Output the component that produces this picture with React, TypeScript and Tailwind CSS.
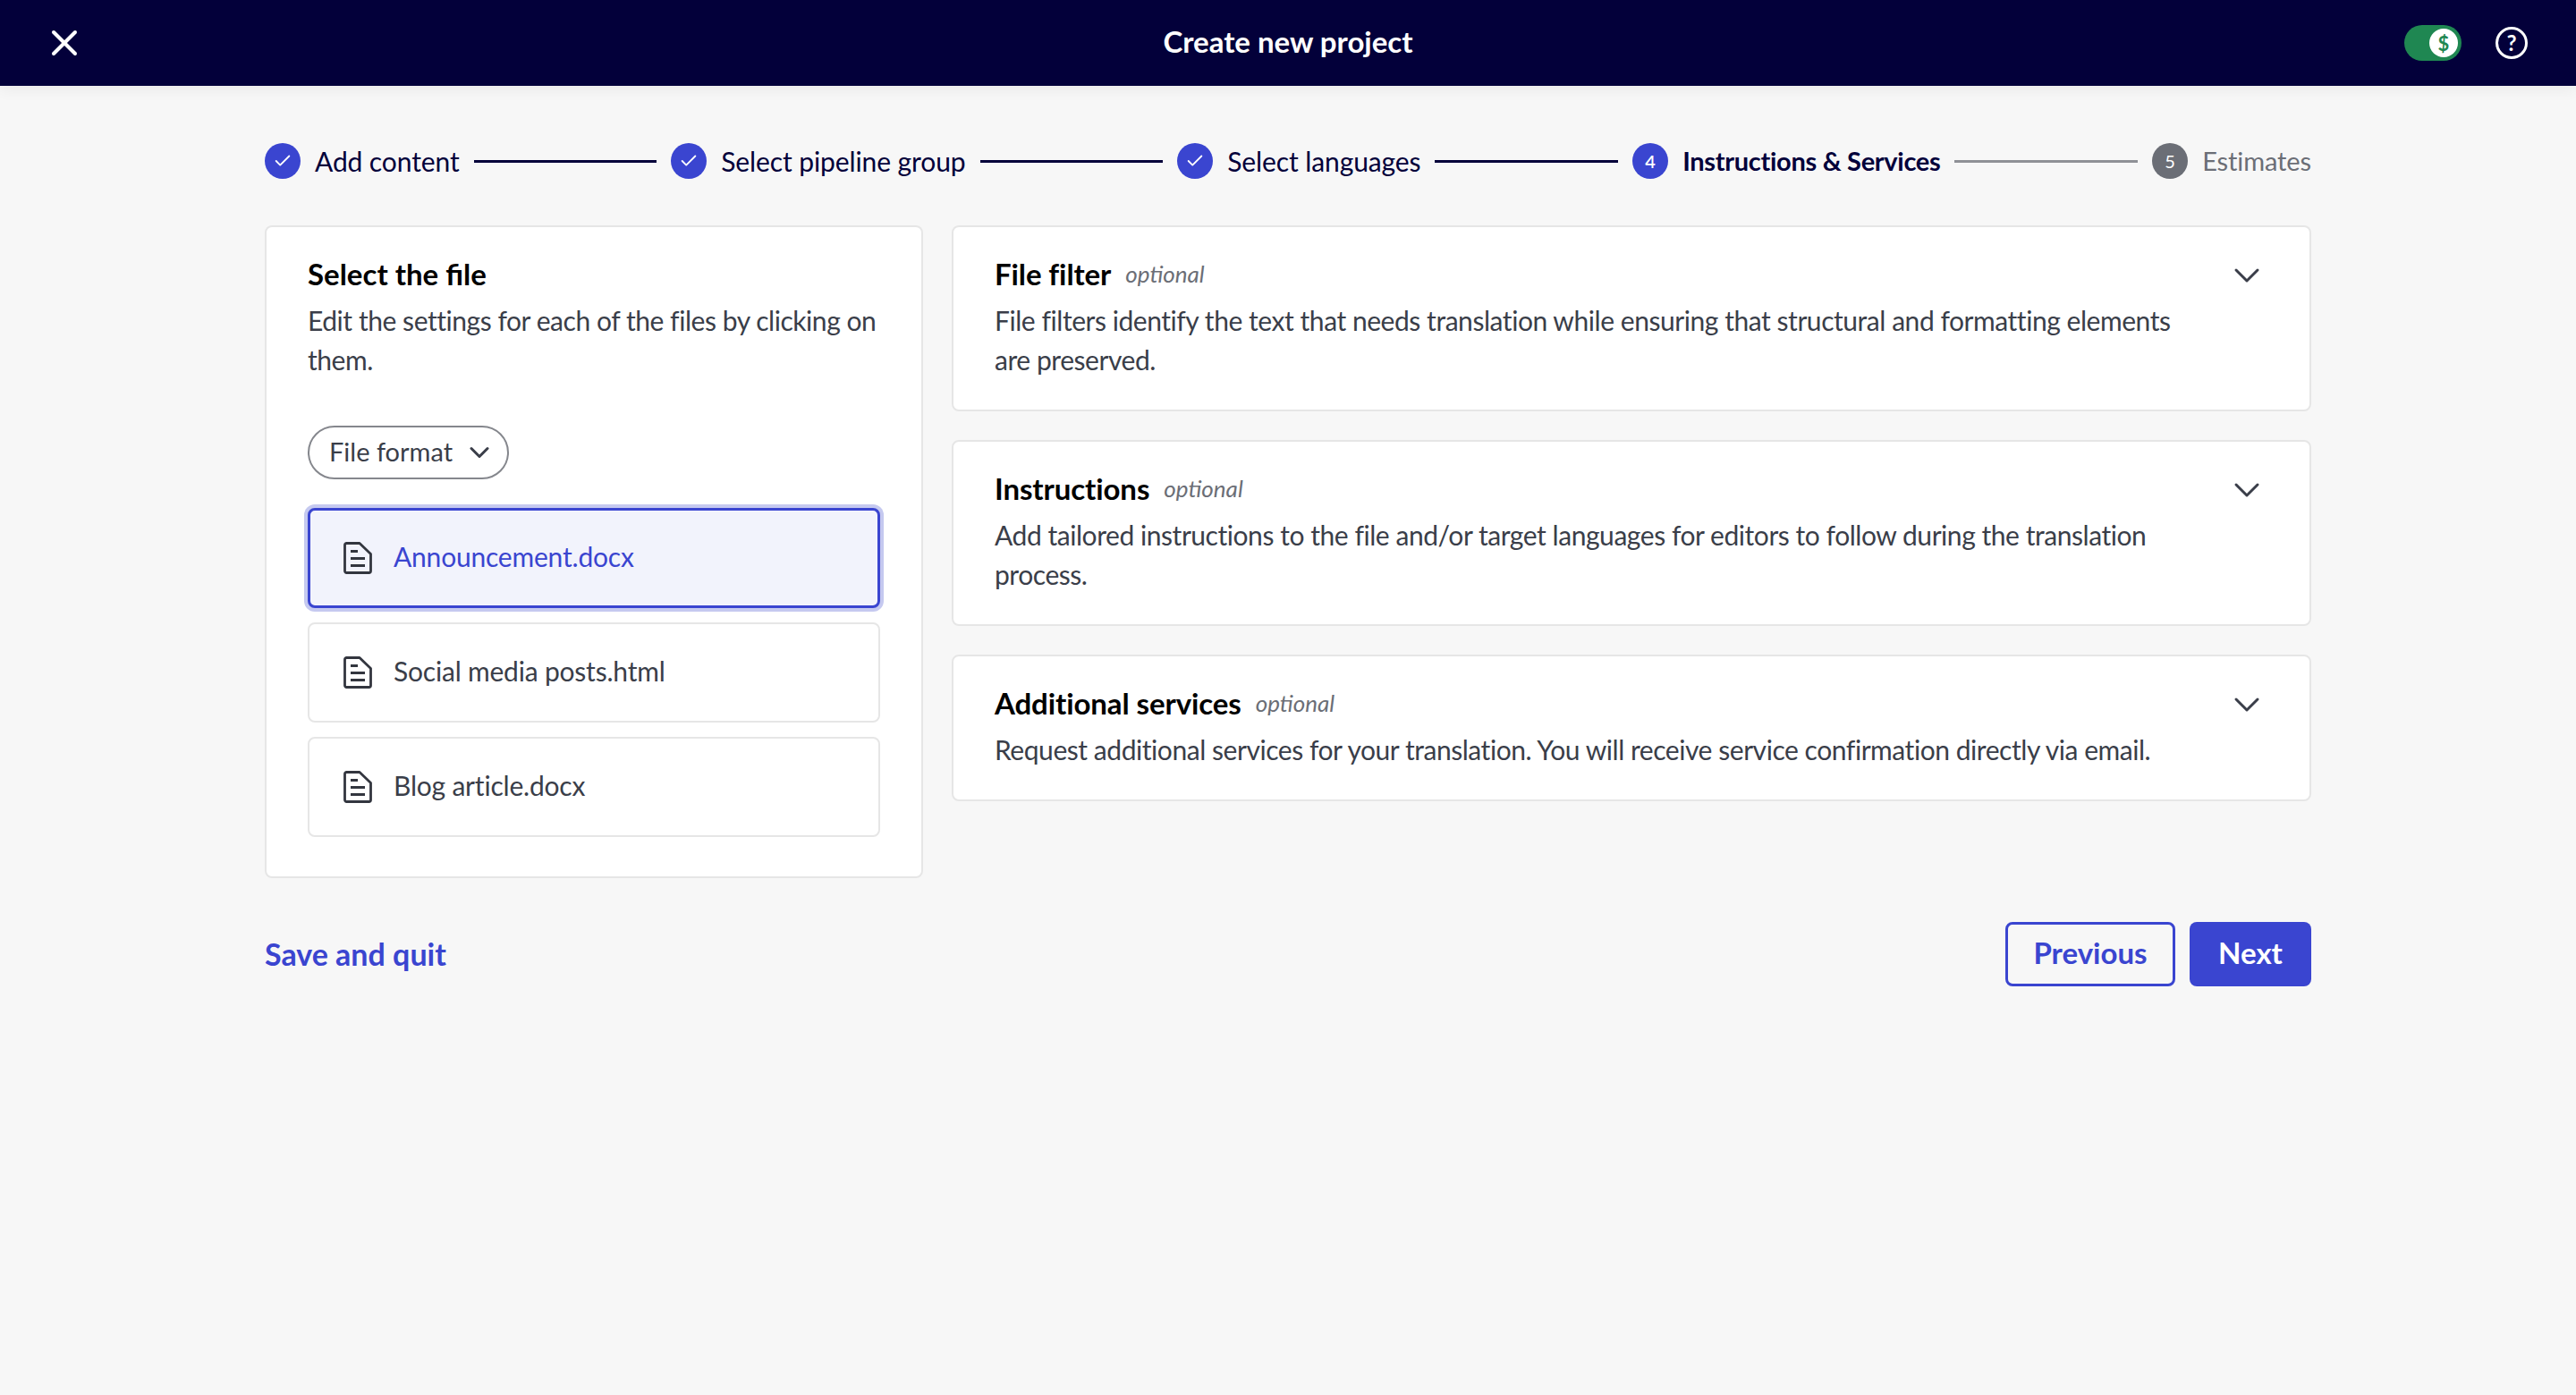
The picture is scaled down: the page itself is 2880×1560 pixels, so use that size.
import { Fragment } from "react";
import { Check, ChevronDown, X } from "lucide-react";

const FONT = "font-['Lato','Liberation_Sans',sans-serif]";

const STEPS = [
  { label: "Add content", state: "done" },
  { label: "Select pipeline group", state: "done" },
  { label: "Select languages", state: "done" },
  { label: "Instructions & Services", state: "current", num: 4 },
  { label: "Estimates", state: "todo", num: 5 },
];

const FILES = [
  { name: "Announcement.docx", selected: true },
  { name: "Social media posts.html", selected: false },
  { name: "Blog article.docx", selected: false },
];

const SECTIONS = [
  {
    title: "File filter",
    text: "File filters identify the text that needs translation while ensuring that structural and formatting elements are preserved.",
  },
  {
    title: "Instructions",
    text: "Add tailored instructions to the file and/or target languages for editors to follow during the translation process.",
  },
  {
    title: "Additional services",
    text: "Request additional services for your translation. You will receive service confirmation directly via email.",
  },
];

function FileIcon() {
  return (
    <svg width="32" height="36" viewBox="0 0 32 36" fill="none" stroke="#33363f" strokeWidth="2.8" strokeLinejoin="round" className="shrink-0">
      <path d="M3.5 1.5H18L30.5 13.5V32.5a2 2 0 0 1-2 2H3.5a2 2 0 0 1-2-2V3.5a2 2 0 0 1 2-2z" />
      <path d="M8 10.5h8M8 18.5h16M8 26.5h16" />
    </svg>
  );
}

function Stepper() {
  return (
    <div className="flex items-center gap-4 h-10">
      {STEPS.map((s, i) => (
        <Fragment key={s.label}>
          <span
            className={
              s.state === "todo"
                ? "flex items-center justify-center w-10 h-10 rounded-full bg-[#6b6e76] text-white text-[20px] shrink-0"
                : "flex items-center justify-center w-10 h-10 rounded-full bg-[#3a45d0] text-white text-[20px] font-semibold shrink-0"
            }
          >
            {s.state === "done" ? <Check size={22} strokeWidth={2} /> : s.num}
          </span>
          <span
            className={
              s.state === "current"
                ? "text-[29px] font-bold tracking-[-0.3px] text-[#03003a] whitespace-nowrap"
                : s.state === "todo"
                  ? "text-[29px] tracking-[-0.1px] text-[#6b6e76] whitespace-nowrap"
                  : "text-[30px] tracking-[-0.1px] text-[#03003a] whitespace-nowrap"
            }
          >
            {s.label}
          </span>
          {i < STEPS.length - 1 && (
            <span className={s.state === "current" ? "flex-1 h-[3px] bg-[#8f9196]" : "flex-1 h-[3px] bg-[#03003a]"} />
          )}
        </Fragment>
      ))}
    </div>
  );
}

export default function App() {
  return (
    <div className={`${FONT} min-h-[1560px] bg-[#f7f7f7] text-[#3a3e49]`}>
      <header className="flex items-center h-24 bg-[#03003a] px-[54px] shadow-[0_4px_16px_rgba(0,0,0,0.06)]">
        <div className="flex-1">
          <X size={48} strokeWidth={2} className="text-white -ml-[6px]" />
        </div>
        <h1 className="text-[33px] font-bold text-white pb-[2px]">Create new project</h1>
        <div className="flex-1 flex items-center justify-end gap-[38px]">
          <div className="flex items-center justify-end w-16 h-10 pr-1 rounded-full bg-[#1f8752]">
            <span className="flex items-center justify-center w-8 h-8 rounded-full bg-white text-[#1f8752] text-[22px] font-bold">$</span>
          </div>
          <span className="flex items-center justify-center w-9 h-9 rounded-full border-[3px] border-white text-white text-[24px] font-bold">?</span>
        </div>
      </header>

      <main className="px-[296px] pt-[64px]">
        <Stepper />

        <div className="flex items-start gap-8 mt-[52px]">
          <section className="w-[736px] shrink-0 bg-white border-2 border-[#e6e6e6] rounded-lg px-[46px] pt-[30px] pb-[44px]">
            <h2 className="text-[33px] font-bold text-black leading-[44px]">Select the file</h2>
            <p className="text-[30px] tracking-[-0.45px] leading-[44px] mt-2">Edit the settings for each of the files by clicking on them.</p>
            <button className="flex items-center gap-3 h-[60px] mt-[52px] pl-[22px] pr-[13px] rounded-full border-2 border-[#85878d] text-[29px]">
              <span className="pb-[2px]">File format</span>
              <ChevronDown size={36} strokeWidth={2} />
            </button>
            <ul className="flex flex-col gap-4 mt-[32px]">
              {FILES.map((f) => (
                <li
                  key={f.name}
                  className={
                    f.selected
                      ? "flex items-center gap-6 h-28 pl-[37px] rounded-lg border-[3px] border-[#3a45d0] bg-[#f2f3fc] text-[#3a45d0] text-[30px] tracking-[-0.2px] shadow-[0_0_0_4px_#c5c9f0]"
                      : "flex items-center gap-6 h-28 pl-[38px] rounded-lg border-2 border-[#e6e6e6] bg-white text-[30px] tracking-[-0.2px]"
                  }
                >
                  <FileIcon />
                  <span className="pb-1">{f.name}</span>
                </li>
              ))}
            </ul>
          </section>

          <div className="flex-1 flex flex-col gap-8">
            {SECTIONS.map((s) => (
              <section key={s.title} className="flex justify-between bg-white border-2 border-[#e6e6e6] rounded-lg px-[46px] pt-[30px] pb-[34px]">
                <div className="w-[1320px]">
                  <div className="flex items-center gap-4">
                    <h2 className="text-[33px] font-bold tracking-[-0.1px] text-black leading-[44px]">{s.title}</h2>
                    <span className="text-[26px] italic text-[#6b6e76]">optional</span>
                  </div>
                  <p className="text-[30px] tracking-[-0.45px] leading-[44px] mt-2">{s.text}</p>
                </div>
                <ChevronDown size={48} strokeWidth={1.5} className="text-[#3a3e49]" />
              </section>
            ))}
          </div>
        </div>

        <div className="flex items-center justify-between mt-[49px]">
          <a className="text-[34px] font-bold text-[#3a45d0] pb-[2px]">Save and quit</a>
          <div className="flex gap-4">
            <button className="h-[72px] w-[190px] pb-[2px] rounded-lg border-[3px] border-[#3a45d0] text-[#3a45d0] text-[33px] font-bold">Previous</button>
            <button className="h-[72px] w-[136px] pb-[2px] rounded-lg bg-[#3a45d0] text-white text-[33px] font-bold">Next</button>
          </div>
        </div>
      </main>
    </div>
  );
}
